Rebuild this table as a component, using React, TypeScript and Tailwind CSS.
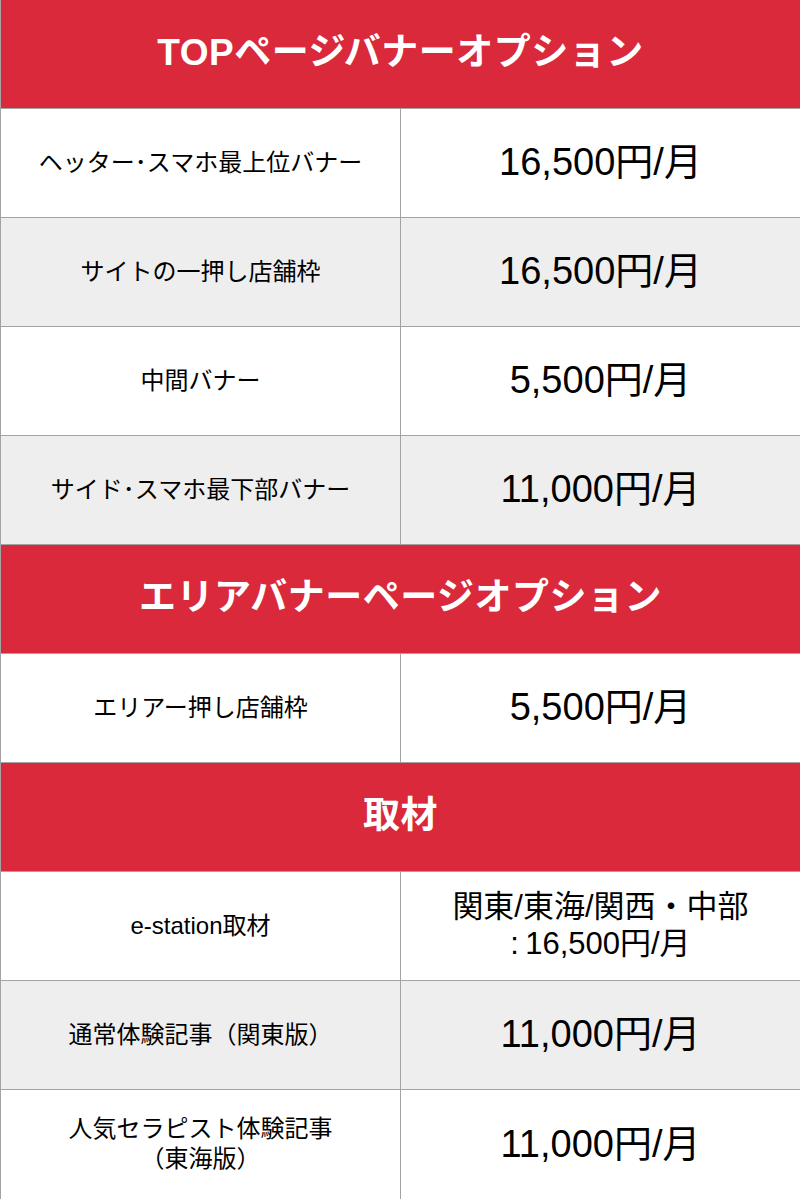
import React from "react";

type Row =
  | { kind: "head"; title: string }
  | { kind: "item"; label: React.ReactNode; price: React.ReactNode; alt?: boolean };

const rows: Row[] = [
  { kind: "head", title: "TOPページバナーオプション" },
  { kind: "item", label: "ヘッター･スマホ最上位バナー", price: "16,500円/月" },
  { kind: "item", label: "サイトの一押し店舗枠", price: "16,500円/月", alt: true },
  { kind: "item", label: "中間バナー", price: "5,500円/月" },
  { kind: "item", label: "サイド･スマホ最下部バナー", price: "11,000円/月", alt: true },
  { kind: "head", title: "エリアバナーページオプション" },
  { kind: "item", label: "エリアー押し店舗枠", price: "5,500円/月" },
  { kind: "head", title: "取材" },
  {
    kind: "item",
    label: "e-station取材",
    price: (
      <span className="text-[31px] leading-[37px] block">
        関東/東海/関西・中部
        <br />
        :&thinsp;16,500円/月
      </span>
    ),
  },
  { kind: "item", label: "通常体験記事（関東版）", price: "11,000円/月", alt: true },
  {
    kind: "item",
    label: (
      <>
        人気セラピスト体験記事
        <br />
        （東海版）
      </>
    ),
    price: "11,000円/月",
  },
];

export default function App() {
  return (
    <div
      className="w-[800px] h-[1200px] overflow-hidden bg-white text-black"
      style={{ fontFamily: '"Liberation Sans", "Noto Sans CJK JP", sans-serif' }}
    >
      {rows.map((r, i) =>
        r.kind === "head" ? (
          <div
            key={i}
            className="h-[109px] bg-[#d9293b] border-l border-b border-[#a3a3a3] flex items-center justify-center"
          >
            <h2 className="text-white text-[37px] font-bold tracking-[0.5px] pb-[2px]">{r.title}</h2>
          </div>
        ) : (
          <div
            key={i}
            className={`h-[109px] grid grid-cols-[400px_1fr] border-l border-[#a3a3a3] ${
              i === rows.length - 1 ? "border-b-0" : "border-b"
            } ${r.alt ? "bg-[#eeeeee]" : "bg-white"}`}
          >
            <div className="flex items-center justify-center border-r border-[#a3a3a3] text-center text-[24px] leading-[30px] pb-[1px]">
              {r.label}
            </div>
            <div className="flex items-center justify-center text-center text-[38px] leading-none pb-[2px]">
              {r.price}
            </div>
          </div>
        )
      )}
    </div>
  );
}
